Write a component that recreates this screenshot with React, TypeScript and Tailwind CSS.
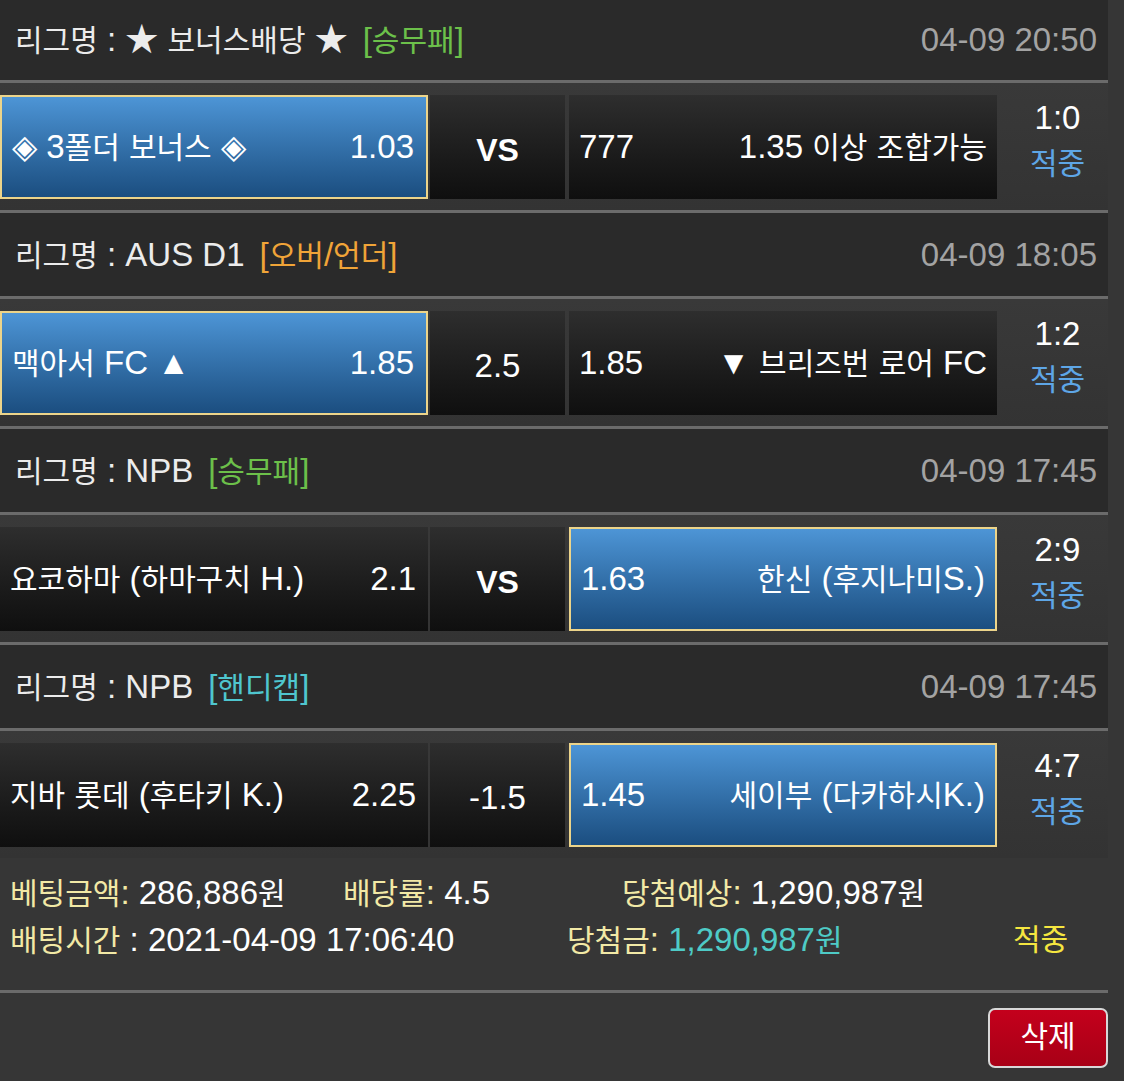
import React from 'react';

type Side = { text: string; odds: string };
type Match = {
  league: string;
  tag: string;
  tagColor: string;
  time: string;
  home: Side;
  center: string;
  centerBold?: boolean;
  away: Side;
  pick: 'home' | 'away';
  score: string;
};

const matches: Match[] = [
  {
    league: '★ 보너스배당 ★',
    tag: '[승무패]',
    tagColor: 'text-[#6cc04a]',
    time: '04-09 20:50',
    home: { text: '◈ 3폴더 보너스 ◈', odds: '1.03' },
    center: 'VS',
    centerBold: true,
    away: { text: '1.35 이상 조합가능', odds: '777' },
    pick: 'home',
    score: '1:0',
  },
  {
    league: 'AUS D1',
    tag: '[오버/언더]',
    tagColor: 'text-[#f0a438]',
    time: '04-09 18:05',
    home: { text: '맥아서 FC ▲', odds: '1.85' },
    center: '2.5',
    away: { text: '▼ 브리즈번 로어 FC', odds: '1.85' },
    pick: 'home',
    score: '1:2',
  },
  {
    league: 'NPB',
    tag: '[승무패]',
    tagColor: 'text-[#6cc04a]',
    time: '04-09 17:45',
    home: { text: '요코하마 (하마구치 H.)', odds: '2.1' },
    center: 'VS',
    centerBold: true,
    away: { text: '한신 (후지나미S.)', odds: '1.63' },
    pick: 'away',
    score: '2:9',
  },
  {
    league: 'NPB',
    tag: '[핸디캡]',
    tagColor: 'text-[#4fc6cf]',
    time: '04-09 17:45',
    home: { text: '지바 롯데 (후타키 K.)', odds: '2.25' },
    center: '-1.5',
    away: { text: '세이부 (다카하시K.)', odds: '1.45' },
    pick: 'away',
    score: '4:7',
  },
];

const darkCell = 'bg-gradient-to-b from-[#2e2e2e] to-[#0f0f0f]';
const blueCell = 'bg-gradient-to-b from-[#4d95d6] to-[#1b4e80] border-2 border-[#ecd48a]';

// hangul glyphs run a bit wider than latin ones, so they get a smaller size
function T({ s }: { s: string }) {
  const parts = s.split(/([\uAC00-\uD7A3\u3131-\u318E]+)/);
  return (
    <>
      {parts.map((p, i) =>
        i % 2 === 1 ? (
          <span key={i} className="text-[30px]">
            {p}
          </span>
        ) : (
          <React.Fragment key={i}>{p}</React.Fragment>
        )
      )}
    </>
  );
}

function Line() {
  return <div className="h-[3px] w-[1108px] bg-[#6b6b6b]" />;
}

function Header({ m, first }: { m: Match; first: boolean }) {
  return (
    <div
      className={`flex items-center justify-between w-[1108px] bg-[#2a2a2a] pl-[15px] pr-[11px] ${first ? 'h-[80px]' : 'h-[83px]'}`}
    >
      <div className="text-[#ececec]">
        <T s={`리그명 : ${m.league}`} />
        <span className={`ml-[15px] ${m.tagColor}`}>
          <T s={m.tag} />
        </span>
      </div>
      <div className="text-[#a3a3a3]">{m.time}</div>
    </div>
  );
}

function Row({ m }: { m: Match }) {
  const homeSel = m.pick === 'home';
  const awaySel = m.pick === 'away';
  return (
    <div className="flex items-center h-[127px] w-[1108px] bg-gradient-to-b from-[#393939] to-[#333333]">
      <div
        className={`flex items-center justify-between w-[428px] h-[104px] pl-[10px] pr-[12px] ${homeSel ? blueCell : darkCell}`}
      >
        <span>
          <T s={m.home.text} />
        </span>
        <span>{m.home.odds}</span>
      </div>
      <div
        className={`flex items-center justify-center w-[135px] h-[104px] ml-[2px] pt-[6px] ${darkCell} ${m.centerBold ? 'font-bold text-[32px]' : ''}`}
      >
        {m.center}
      </div>
      <div
        className={`flex items-center justify-between w-[428px] h-[104px] ml-[4px] pl-[10px] pr-[10px] ${awaySel ? blueCell : darkCell}`}
      >
        <span>{m.away.odds}</span>
        <span>
          <T s={m.away.text} />
        </span>
      </div>
      <div className="flex flex-col items-center flex-1 pl-[10px] leading-[46px] -mt-[12px]">
        <span>{m.score}</span>
        <span className="text-[#5ea6e6] text-[30px]">적중</span>
      </div>
    </div>
  );
}

export default function App() {
  return (
    <div
      className="min-h-[1081px] w-[1124px] bg-[#363636] text-white text-[33px] overflow-hidden"
      style={{ fontFamily: '"Liberation Sans", "Noto Sans CJK KR", sans-serif' }}
    >
      {matches.map((m, i) => (
        <div key={i}>
          {i > 0 && <Line />}
          <Header m={m} first={i === 0} />
          <Line />
          <Row m={m} />
        </div>
      ))}

      <div className="h-[132px] w-[1108px] pt-[12px] pl-[10px] leading-[46px]">
        <div className="flex">
          <span className="w-[333px]">
            <span className="text-[#f2e9a6]">
              <T s="베팅금액:" />
            </span>{' '}
            286,886<T s="원" />
          </span>
          <span className="w-[279px]">
            <span className="text-[#f2e9a6]">
              <T s="배당률:" />
            </span>{' '}
            4.5
          </span>
          <span>
            <span className="text-[#f2e9a6]">
              <T s="당첨예상:" />
            </span>{' '}
            1,290,987<T s="원" />
          </span>
        </div>
        <div className="flex">
          <span className="w-[557px]">
            <span className="text-[#f2e9a6]">
              <T s="배팅시간" />
            </span>{' '}
            : 2021-04-09 17:06:40
          </span>
          <span className="w-[446px]">
            <span className="text-[#f2e9a6]">
              <T s="당첨금:" />
            </span>{' '}
            <span className="text-[#4ecbc6]">
              1,290,987<T s="원" />
            </span>
          </span>
          <span className="text-[#f5e640] text-[30px]">적중</span>
        </div>
      </div>
      <Line />
      <div className="flex justify-end w-[1108px] pt-[15px]">
        <button className="w-[120px] h-[60px] rounded-[7px] border-2 border-[#d8d8d8] bg-gradient-to-b from-[#c4001c] to-[#a80016] text-white text-[30px] pb-[4px]">
          삭제
        </button>
      </div>
    </div>
  );
}
